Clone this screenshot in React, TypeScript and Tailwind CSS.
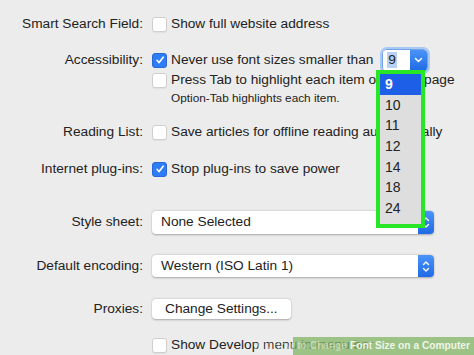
import React from "react";

const font = { fontFamily: '"Liberation Sans", Arial, sans-serif' };

function Checkbox({ checked = false }: { checked?: boolean }) {
  if (checked) {
    return (
      <div className="w-[15px] h-[15px] shrink-0 rounded-[3px] bg-[#2e7cf6] border border-[#2868d8] flex items-center justify-center">
        <svg width="10" height="10" viewBox="0 0 10 10" fill="none">
          <path d="M2 5.3 L4.1 7.6 L8.2 2.2" stroke="white" strokeWidth="1.6" strokeLinecap="round" strokeLinejoin="round" />
        </svg>
      </div>
    );
  }
  return <div className="w-[15px] h-[15px] shrink-0 rounded-[3px] bg-white border border-[#cfcfcf] shadow-[0_1px_1px_rgba(0,0,0,0.06)]" />;
}

function Row({ label, h, mt, children }: { label?: string; h: string; mt: string; children: React.ReactNode }) {
  return (
    <div className={`flex items-center ${h} ${mt}`}>
      <div className="w-[143px] shrink-0 text-right text-[#222]">{label}</div>
      <div className="ml-[9px] flex items-center gap-[4px] whitespace-nowrap">{children}</div>
    </div>
  );
}

function Chevrons() {
  return (
    <div className="w-[16px] self-stretch rounded-r-[4px] bg-gradient-to-b from-[#4a93f8] to-[#1f6ae6] flex items-center justify-center">
      <svg width="8" height="13" viewBox="0 0 8 13" fill="none">
        <path d="M1.5 4.5 L4 2 L6.5 4.5 M1.5 8.5 L4 11 L6.5 8.5" stroke="white" strokeWidth="1.4" strokeLinecap="round" strokeLinejoin="round" />
      </svg>
    </div>
  );
}

function Select({ value, h }: { value: string; h: string }) {
  return (
    <div className={`w-[282px] ${h} flex rounded-[4px] bg-white shadow-[0_0.5px_2px_rgba(0,0,0,0.3)]`}>
      <div className="flex-1 pl-[9px] flex items-center text-[#222]">{value}</div>
      <Chevrons />
    </div>
  );
}

export default function App() {
  const sizes = ["9", "10", "11", "12", "14", "18", "24"];
  return (
    <div style={font} className="relative w-[474px] h-[355px] overflow-hidden bg-[#ececec] text-[13.7px] text-[#222]">
      <Row label="Smart Search Field:" h="h-[20px]" mt="mt-[14px]">
        <Checkbox />
        <span>Show full website address</span>
      </Row>

      <Row label="Accessibility:" h="h-[20px]" mt="mt-[16px]">
        <Checkbox checked />
        <span>Never use font sizes smaller than</span>
        <div className="ml-[5px] w-[46px] h-[23px] flex rounded-[5px] border border-[#6fa3ee] ring-[2px] ring-[#a9c8f3]">
          <div className="w-[27px] bg-white rounded-l-[4px] flex items-center pl-[4px]">
            <span className="bg-[#b6d1f5] px-[1px] leading-[16px]">9</span>
          </div>
          <div className="flex-1 rounded-r-[4px] bg-gradient-to-b from-[#4a93f8] to-[#1f6ae6] flex items-center justify-center">
            <svg width="9" height="6" viewBox="0 0 9 6" fill="none">
              <path d="M1.5 1.5 L4.5 4.5 L7.5 1.5" stroke="white" strokeWidth="1.5" strokeLinecap="round" strokeLinejoin="round" />
            </svg>
          </div>
        </div>
      </Row>

      <Row h="h-[20px]" mt="mt-0">
        <Checkbox />
        <span>Press Tab to highlight each item on a webpage</span>
      </Row>

      <Row h="h-[18px]" mt="mt-0">
        <span className="ml-[19px] text-[11.8px]">Option-Tab highlights each item.</span>
      </Row>

      <Row label="Reading List:" h="h-[20px]" mt="mt-[14px]">
        <Checkbox />
        <span>Save articles for offline reading automatically</span>
      </Row>

      <Row label="Internet plug-ins:" h="h-[20px]" mt="mt-[17px]">
        <Checkbox checked />
        <span>Stop plug-ins to save power</span>
      </Row>

      <Row label="Style sheet:" h="h-[24px]" mt="mt-[31px]">
        <Select value="None Selected" h="h-[23px]" />
      </Row>

      <Row label="Default encoding:" h="h-[24px]" mt="mt-[20px]">
        <Select value="Western (ISO Latin 1)" h="h-[22px]" />
      </Row>

      <Row label="Proxies:" h="h-[22px]" mt="mt-[20px]">
        <div className="w-[139px] h-[20px] rounded-[4px] bg-white shadow-[0_0.5px_2px_rgba(0,0,0,0.3)] flex items-center pl-[13px]">
          Change Settings...
        </div>
      </Row>

      <Row h="h-[20px]" mt="mt-[15px]">
        <Checkbox />
        <span>Show Develop menu in menu bar</span>
      </Row>

      {/* open font-size menu */}
      <div className="absolute left-[376px] top-[70px] w-[49px] h-[158px] border-[4px] border-[#26e626] bg-[#dedede]">
        {sizes.map((s, i) => (
          <div
            key={s}
            className={`h-[20.7px] flex items-center pl-[5px] text-[14px] ${i === 0 ? "bg-[#1d5fe6] text-white font-bold" : "text-[#222]"}`}
          >
            {s}
          </div>
        ))}
      </div>

      {/* watermark */}
      <div className="absolute right-0 bottom-0 left-[293px] h-[18px] bg-[rgba(130,180,100,0.75)] flex items-center justify-end pr-[4px] whitespace-nowrap text-[10.2px] font-bold text-[#eef5e8]">
        <span className="opacity-50 mr-[3px]">wikiHow to Change</span>
        <span>Font Size on a Computer</span>
      </div>
    </div>
  );
}
